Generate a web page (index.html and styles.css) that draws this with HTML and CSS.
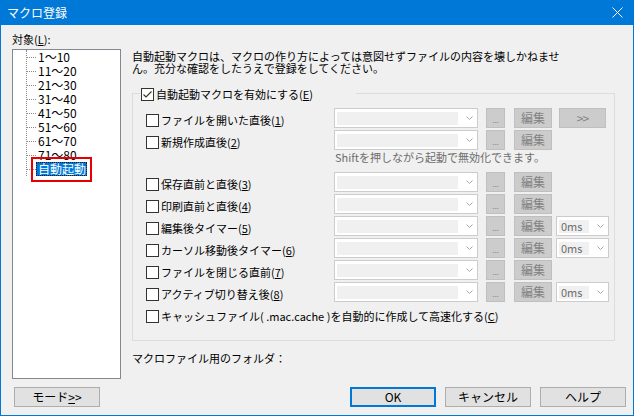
FILE: index.html
```html
<!DOCTYPE html>
<html lang="ja">
<head>
<meta charset="utf-8">
<title>マクロ登録</title>
<link rel="stylesheet" href="styles.css">
</head>
<body>
<div class="window">
  <div class="titlebar">
    <span class="title">マクロ登録</span>
    <svg class="close" width="11" height="11" viewBox="0 0 11 11"><path d="M0.5 0.5 L10.5 10.5 M10.5 0.5 L0.5 10.5" stroke="#fff" stroke-width="1" fill="none"/></svg>
  </div>
  <div class="client">
    <div class="main">
      <div class="left">
        <div class="label">対象(<u>L</u>):</div>
        <div class="tree">
          <div class="tree-list">
            <div class="item"><span class="h"></span><span class="txt">1～10</span></div>
            <div class="item"><span class="h"></span><span class="txt">11～20</span></div>
            <div class="item"><span class="h"></span><span class="txt">21～30</span></div>
            <div class="item"><span class="h"></span><span class="txt">31～40</span></div>
            <div class="item"><span class="h"></span><span class="txt">41～50</span></div>
            <div class="item"><span class="h"></span><span class="txt">51～60</span></div>
            <div class="item"><span class="h"></span><span class="txt">61～70</span></div>
            <div class="item"><span class="h"></span><span class="txt">71～80</span></div>
            <div class="item"><span class="h"></span><span class="txt sel">自動起動</span></div>
          </div>
          <div class="annot"></div>
        </div>
      </div>
      <div class="right">
        <p class="desc">自動起動マクロは、マクロの作り方によっては意図せずファイルの内容を壊しかねませ<br>ん。充分な確認をしたうえで登録をしてください。</p>
        <div class="group">
          <div class="legend"><span class="cb"><svg width="11" height="11" viewBox="0 0 11 11"><path d="M1.5 5.5 L4 8 L9.5 2.5" stroke="#333" stroke-width="1.1" fill="none"/></svg></span><span class="cbtext">自動起動マクロを有効にする(<u>E</u>)</span></div>

          <div class="row">
            <div class="opt"><span class="cb"></span><span class="cbtext">ファイルを開いた直後(<u>1</u>)</span></div>
            <div class="combo"><span class="field"></span><svg class="chev" width="7" height="4" viewBox="0 0 7 4"><path d="M0.5 0.5 L3.5 3.5 L6.5 0.5" stroke="#a8a8a8" fill="none"/></svg></div>
            <div class="btn dots">...</div>
            <div class="btn edit">編集</div>
            <div class="btn more">&gt;&gt;</div>
          </div>
          <div class="row">
            <div class="opt"><span class="cb"></span><span class="cbtext">新規作成直後(<u>2</u>)</span></div>
            <div class="combo"><span class="field"></span><svg class="chev" width="7" height="4" viewBox="0 0 7 4"><path d="M0.5 0.5 L3.5 3.5 L6.5 0.5" stroke="#a8a8a8" fill="none"/></svg></div>
            <div class="btn dots">...</div>
            <div class="btn edit">編集</div>
          </div>
          <div class="hint">Shiftを押しながら起動で無効化できます。</div>
          <div class="row">
            <div class="opt"><span class="cb"></span><span class="cbtext">保存直前と直後(<u>3</u>)</span></div>
            <div class="combo"><span class="field"></span><svg class="chev" width="7" height="4" viewBox="0 0 7 4"><path d="M0.5 0.5 L3.5 3.5 L6.5 0.5" stroke="#a8a8a8" fill="none"/></svg></div>
            <div class="btn dots">...</div>
            <div class="btn edit">編集</div>
          </div>
          <div class="row">
            <div class="opt"><span class="cb"></span><span class="cbtext">印刷直前と直後(<u>4</u>)</span></div>
            <div class="combo"><span class="field"></span><svg class="chev" width="7" height="4" viewBox="0 0 7 4"><path d="M0.5 0.5 L3.5 3.5 L6.5 0.5" stroke="#a8a8a8" fill="none"/></svg></div>
            <div class="btn dots">...</div>
            <div class="btn edit">編集</div>
          </div>
          <div class="row">
            <div class="opt"><span class="cb"></span><span class="cbtext">編集後タイマー(<u>5</u>)</span></div>
            <div class="combo"><span class="field"></span><svg class="chev" width="7" height="4" viewBox="0 0 7 4"><path d="M0.5 0.5 L3.5 3.5 L6.5 0.5" stroke="#a8a8a8" fill="none"/></svg></div>
            <div class="btn dots">...</div>
            <div class="btn edit">編集</div>
            <div class="combo ms"><span class="field">0ms</span><svg class="chev" width="7" height="4" viewBox="0 0 7 4"><path d="M0.5 0.5 L3.5 3.5 L6.5 0.5" stroke="#a8a8a8" fill="none"/></svg></div>
          </div>
          <div class="row">
            <div class="opt"><span class="cb"></span><span class="cbtext">カーソル移動後タイマー(<u>6</u>)</span></div>
            <div class="combo"><span class="field"></span><svg class="chev" width="7" height="4" viewBox="0 0 7 4"><path d="M0.5 0.5 L3.5 3.5 L6.5 0.5" stroke="#a8a8a8" fill="none"/></svg></div>
            <div class="btn dots">...</div>
            <div class="btn edit">編集</div>
            <div class="combo ms"><span class="field">0ms</span><svg class="chev" width="7" height="4" viewBox="0 0 7 4"><path d="M0.5 0.5 L3.5 3.5 L6.5 0.5" stroke="#a8a8a8" fill="none"/></svg></div>
          </div>
          <div class="row">
            <div class="opt"><span class="cb"></span><span class="cbtext">ファイルを閉じる直前(<u>7</u>)</span></div>
            <div class="combo"><span class="field"></span><svg class="chev" width="7" height="4" viewBox="0 0 7 4"><path d="M0.5 0.5 L3.5 3.5 L6.5 0.5" stroke="#a8a8a8" fill="none"/></svg></div>
            <div class="btn dots">...</div>
            <div class="btn edit">編集</div>
          </div>
          <div class="row">
            <div class="opt"><span class="cb"></span><span class="cbtext">アクティブ切り替え後(<u>8</u>)</span></div>
            <div class="combo"><span class="field"></span><svg class="chev" width="7" height="4" viewBox="0 0 7 4"><path d="M0.5 0.5 L3.5 3.5 L6.5 0.5" stroke="#a8a8a8" fill="none"/></svg></div>
            <div class="btn dots">...</div>
            <div class="btn edit">編集</div>
            <div class="combo ms"><span class="field">0ms</span><svg class="chev" width="7" height="4" viewBox="0 0 7 4"><path d="M0.5 0.5 L3.5 3.5 L6.5 0.5" stroke="#a8a8a8" fill="none"/></svg></div>
          </div>
          <div class="row cache">
            <div class="opt wide"><span class="cb"></span><span class="cbtext">キャッシュファイル( .mac.cache )を自動的に作成して高速化する(<u>C</u>)</span></div>
          </div>
        </div>
        <div class="folder">マクロファイル用のフォルダ：</div>
      </div>
    </div>
    <div class="footer">
      <div class="pbtn mode">モード <u>&gt;</u>&gt;</div>
      <div class="actions">
        <div class="pbtn default">OK</div>
        <div class="pbtn">キャンセル</div>
        <div class="pbtn">ヘルプ</div>
      </div>
    </div>
  </div>
</div>
</body>
</html>
```

FILE: styles.css
```css
html, body {
  margin: 0;
  padding: 0;
}
body {
  width: 634px;
  height: 416px;
  background: #f0f0f0;
  font-family: "Noto Sans CJK JP", "Noto Sans", sans-serif;
  font-size: 11px;
  line-height: 14px;
  color: #000;
  overflow: hidden;
}
u {
  text-decoration: underline;
  text-underline-offset: 1px;
}
.window {
  width: 634px;
  height: 416px;
  display: flex;
  flex-direction: column;
}
.titlebar {
  height: 25px;
  flex: none;
  background: #0078d7;
  color: #fff;
  display: flex;
  align-items: center;
  justify-content: space-between;
  padding: 0 11px 0 7px;
  font-size: 12px;
}
.close {
  display: block;
}
.client {
  flex: 1;
  border: 1px solid #0078d7;
  border-top: none;
  padding: 7px 7px 0 11px;
  display: flex;
  flex-direction: column;
}
.main {
  display: flex;
  gap: 11px;
}
.left {
  width: 109px;
  flex: none;
}
.label {
  height: 14px;
  margin-bottom: 3px;
}
.tree {
  position: relative;
  box-sizing: border-box;
  width: 109px;
  height: 330px;
  background: #fff;
  border: 1px solid #828790;
  font-size: 12px;
}
.tree-list {
  margin: 7px 0 0 13px;
  border-left: 1px dotted #8a8a8a;
}
.item {
  height: 14px;
  display: flex;
  align-items: center;
}
.item:first-child {
  margin-top: -7px;
}
.item:last-child {
  margin-bottom: -7px;
}
.h {
  width: 9px;
  border-top: 1px dotted #8a8a8a;
  flex: none;
}
.txt {
  margin-left: 2px;
  line-height: 14px;
}
.sel {
  margin-left: 0;
  padding: 0 1px 0 2px;
  background: #0078d7;
  color: #fff;
  outline: 1px dotted #1a1a1a;
  outline-offset: -1px;
}
.annot {
  position: absolute;
  left: 18px;
  top: 107px;
  width: 61px;
  height: 25px;
  box-sizing: border-box;
  border: 2px solid #e60000;
}
.right {
  flex: 1;
  padding-top: 18px;
}
.desc {
  margin: 0;
  line-height: 12px;
}
.group {
  position: relative;
  margin-top: 19px;
  box-sizing: border-box;
  width: 483px;
  height: 248px;
  border: 1px solid #dcdcdc;
  padding: 14px 0 0 13px;
}
.legend {
  position: absolute;
  top: -7px;
  left: 7px;
  width: 215px;
  height: 14px;
  background: #f0f0f0;
  display: flex;
  align-items: center;
  padding-left: 1px;
}
.cb {
  width: 13px;
  height: 13px;
  box-sizing: border-box;
  border: 1px solid #333;
  background: #fff;
  flex: none;
  display: flex;
  align-items: center;
  justify-content: center;
}
.cb svg {
  display: block;
}
.cbtext {
  margin-left: 2px;
  white-space: nowrap;
}
.row {
  height: 20px;
  display: flex;
  align-items: flex-start;
  margin-bottom: 2px;
}
.opt {
  width: 188px;
  flex: none;
  height: 20px;
  margin-top: 2px;
  display: flex;
  align-items: center;
}
.opt.wide {
  width: auto;
}
.combo {
  box-sizing: border-box;
  width: 144px;
  height: 20px;
  border: 1px solid #cccccc;
  background: #fff;
  display: flex;
  align-items: center;
  padding: 0 4px 0 2px;
  flex: none;
}
.field {
  width: 121px;
  height: 13px;
  background: #f0f0f0;
  flex: none;
}
.chev {
  margin-left: auto;
  display: block;
}
.combo.ms {
  width: 53px;
  margin-left: 4px;
}
.combo.ms .field {
  width: 30px;
  color: #6d6d6d;
  line-height: 13px;
  padding-left: 2px;
  box-sizing: border-box;
}
.btn {
  box-sizing: border-box;
  height: 20px;
  background: #cccccc;
  border: 1px solid #bfbfbf;
  color: #838383;
  display: flex;
  align-items: center;
  justify-content: center;
  flex: none;
}
.dots {
  width: 19px;
  margin-left: 8px;
  font-size: 8px;
  padding-top: 3px;
}
.edit {
  width: 38px;
  margin-left: 9px;
  font-size: 12px;
}
.more {
  width: 47px;
  margin-left: 7px;
  font-size: 12px;
  letter-spacing: -1px;
}
.hint {
  margin: -2px 0 8px 189px;
  height: 14px;
  color: #6d6d6d;
}
.row.cache {
  margin-top: 2px;
}
.folder {
  margin-top: 10px;
  height: 14px;
}
.footer {
  margin-top: 8px;
  display: flex;
  justify-content: space-between;
  align-items: center;
}
.actions {
  display: flex;
  gap: 9px;
}
.pbtn {
  box-sizing: border-box;
  width: 86px;
  height: 20px;
  background: #e1e1e1;
  border: 1px solid #adadad;
  display: flex;
  align-items: center;
  justify-content: center;
  font-size: 12px;
}
.pbtn.mode {
  margin-left: 2px;
}
.pbtn.default {
  border: 2px solid #0078d7;
}
```
